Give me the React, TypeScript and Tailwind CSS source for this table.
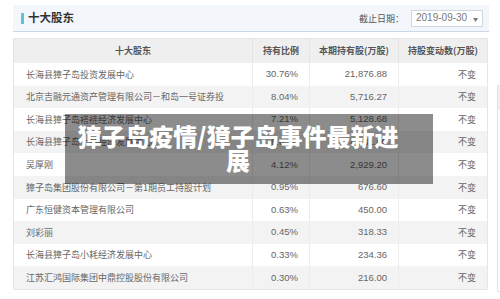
import React from "react";

type Holder = {
  name: string
  ratio: string
  shares: string
  change: string
}

const holders: Holder[] = [
  { name: "长海县獐子岛投资发展中心", ratio: "30.76%", shares: "21,876.88", change: "不变" },
  { name: "北京吉融元通资产管理有限公司－和岛一号证券投", ratio: "8.04%", shares: "5,716.27", change: "不变" },
  { name: "长海县獐子岛褡裢经济发展中心", ratio: "7.21%", shares: "5,128.68", change: "不变" },
  { name: "长海县獐子岛大耗经济发展中心", ratio: "6.65%", shares: "4,731.00", change: "不变" },
  { name: "吴厚刚", ratio: "4.12%", shares: "2,929.20", change: "不变" },
  { name: "獐子岛集团股份有限公司－第1期员工持股计划", ratio: "0.95%", shares: "676.60", change: "不变" },
  { name: "广东恒健资本管理有限公司", ratio: "0.63%", shares: "450.00", change: "不变" },
  { name: "刘彩丽", ratio: "0.45%", shares: "318.33", change: "不变" },
  { name: "长海县獐子岛小耗经济发展中心", ratio: "0.33%", shares: "234.36", change: "不变" },
  { name: "江苏汇鸿国际集团中鼎控股股份有限公司", ratio: "0.30%", shares: "216.00", change: "不变" },
]

const cjk = "font-['Noto_Sans_CJK_SC','Liberation_Sans',sans-serif]"
const num = "font-['Liberation_Sans','Noto_Sans_CJK_SC',sans-serif]"

const App = () => {
  return (
    <div className={`relative w-[500px] h-[299px] overflow-hidden bg-white flex ${cjk}`}>
      <div className="flex flex-col w-[476px] ml-[13px] pt-[5px] shrink-0">
        {/* header bar */}
        <div className="flex items-center justify-between h-[27px] bg-[#f3f6fa] border-b border-[#c9d9ea] pl-[8px] pr-[6px]">
          <div className="flex items-center gap-[4px]">
            <div className="w-[3px] h-[11px] bg-[#5bc4d6]" />
            <p className="text-[11.5px] font-semibold text-[#333] leading-none">十大股东</p>
          </div>
          <div className="flex items-center gap-[7px]">
            <p className="text-[9px] text-[#555] leading-none">截止日期：</p>
            <div className="flex items-center justify-between w-[72px] h-[17px] bg-white border border-[#cfd6de] px-[4px]">
              <span className={`text-[10px] text-[#777] leading-none ${num}`}>2019-09-30</span>
              <span className="text-[5px] text-[#777] leading-none">▼</span>
            </div>
          </div>
        </div>

        {/* table */}
        <div className="mt-[6px] w-[475px] border border-[#e6e6e6] text-[9px] text-[#666]">
          <div className="grid grid-cols-[239px_57px_89px_1fr] h-[24px] bg-[#efefef] font-bold text-[#555]">
            <div className="flex items-center justify-center border-r border-[#e4e4e4]">十大股东</div>
            <div className="flex items-center justify-center border-r border-[#e4e4e4]">持有比例</div>
            <div className="flex items-center justify-center border-r border-[#e4e4e4]">本期持有股(万股)</div>
            <div className="flex items-center justify-center">持股变动数(万股)</div>
          </div>
          {holders.map((h, i) => (
            <div
              key={h.name}
              className={`grid grid-cols-[239px_57px_89px_1fr] h-[22.6px] ${i % 2 === 1 ? "bg-[#f3f3f3]" : "bg-white"}`}
            >
              <div className="flex items-center pl-[12px] border-r border-[#ececec] whitespace-nowrap overflow-hidden">{h.name}</div>
              <div className={`flex items-center justify-end pr-[11px] border-r border-[#ececec] text-[9.5px] ${num}`}>{h.ratio}</div>
              <div className={`flex items-center justify-end pr-[11px] border-r border-[#ececec] text-[9.5px] ${num}`}>{h.shares}</div>
              <div className="flex items-center justify-end pr-[11px]">{h.change}</div>
            </div>
          ))}
        </div>
      </div>

      {/* side panel sliver */}
      <div className="ml-[8px] pt-[85px] shrink-0">
        <div className="w-[40px] h-[207px] border border-[#e6e6e6]">
          <div className="h-[24px] bg-[#efefef]" />
        </div>
      </div>

      {/* title overlay */}
      <div className="absolute left-[65px] top-[114px] w-[368px] h-[70px] bg-black/45 pl-[6px] pr-[28px] pt-[10px]">
        <p className="text-[24px] leading-[24px] font-black text-white text-center">獐子岛疫情/獐子岛事件最新进展</p>
      </div>
    </div>
  )
}

export default App
